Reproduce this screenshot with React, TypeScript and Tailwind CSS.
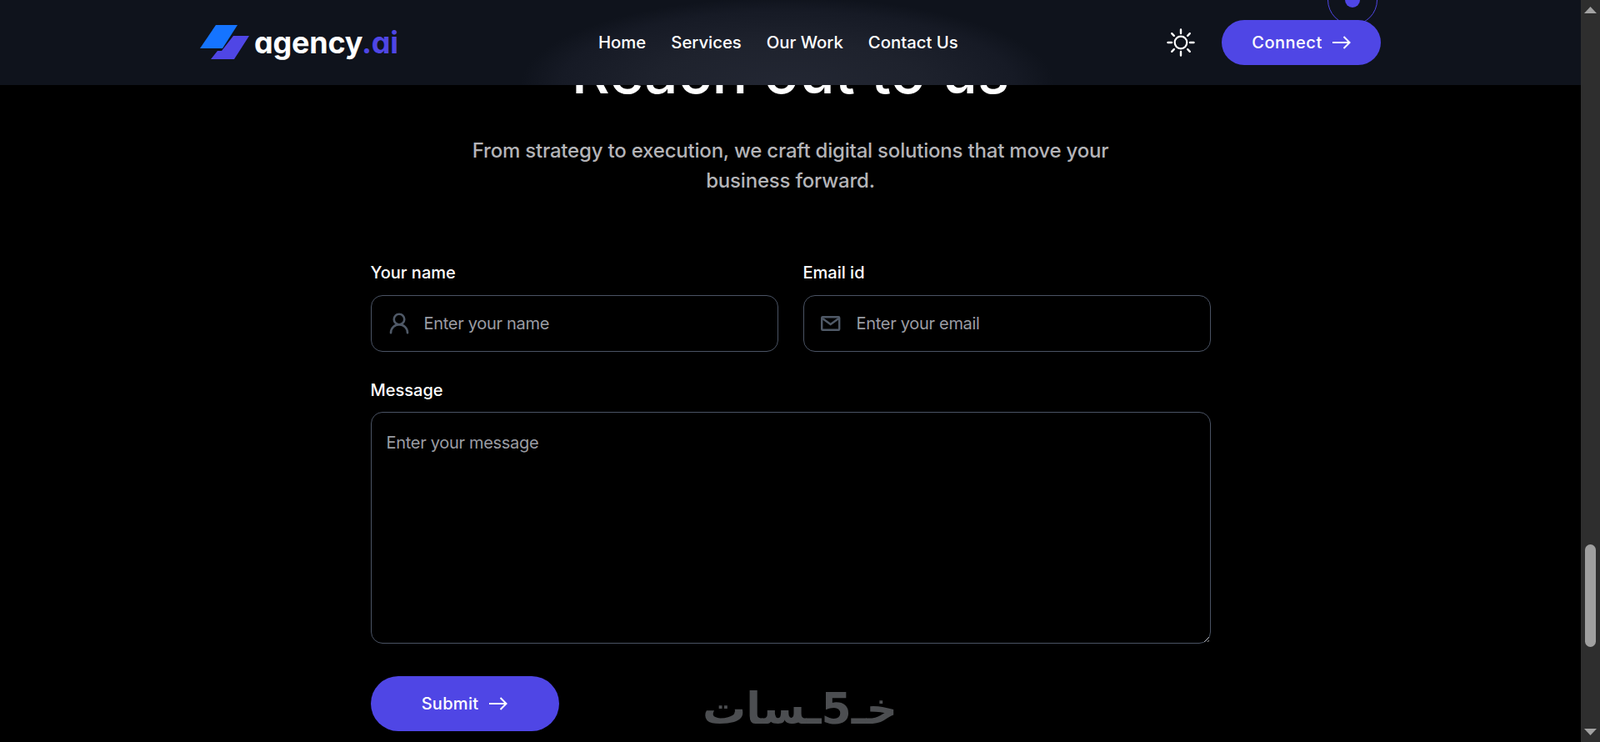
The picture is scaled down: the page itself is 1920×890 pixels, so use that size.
import { UserRound } from "lucide-react";

const navLinks = ["Home", "Services", "Our Work", "Contact Us"];

function Arrow() {
  return (
    <svg width="22" height="16" viewBox="0 0 22 16" fill="none" stroke="currentColor" strokeWidth="2">
      <path d="M0 8h20.5M13.5 1l7 7-7 7" />
    </svg>
  );
}

function SunIcon() {
  return (
    <svg width="34" height="34" viewBox="0 0 34 34" fill="none" stroke="white" strokeWidth="2.4" strokeLinecap="round">
      <circle cx="17" cy="17" r="7.3" strokeWidth="2.2" />
      <path d="M17 1.5v4.5M17 28v4.5M1.5 17H6M28 17h4.5M6.2 6.2l2.6 2.6M25.2 25.2l2.6 2.6M6.2 27.8l2.6-2.6M25.2 8.8l2.6-2.6" />
    </svg>
  );
}

function MailIcon() {
  return (
    <svg width="30" height="30" viewBox="0 0 30 30" fill="none" stroke="#4f5967" strokeWidth="2.4" className="shrink-0">
      <rect x="3.2" y="7.2" width="21" height="15.6" rx="1" />
      <path d="M4 9l9.7 7 9.7-7" />
    </svg>
  );
}

function Logo() {
  return (
    <div className="flex items-center gap-[6px]">
      <svg width="59" height="41" viewBox="0 0 59 41" className="-mt-[1px]">
        <path d="M19 0h26L27 28H0z" fill="#1574ff" />
        <path d="M40 13h19L41 41H13l8-10h5z" fill="#4f46e5" />
      </svg>
      <span className="text-[36px] leading-none font-bold tracking-[-0.2px] text-white [font-feature-settings:'cv11']">
        agency<span className="text-[#4f46e5]">.ai</span>
      </span>
    </div>
  );
}

function Header() {
  return (
    <header className="absolute top-0 left-0 z-10 h-[102px] w-[1897px] overflow-hidden bg-[#0e121b] bg-[radial-gradient(ellipse_320px_105px_at_945px_102px,#232733_0%,#1e222d_50%,#161a25_85%,#0f131c_100%)]">
      <div className="absolute -top-[30px] left-[1593px] flex h-[60px] w-[60px] items-center justify-center rounded-full border border-[#4f46e5]">
        <div className="h-[18px] w-[18px] rounded-full bg-[#4f46e5]" />
      </div>
      <div className="relative flex h-full items-center justify-between px-[240px]">
        <Logo />
        <nav className="absolute left-[718px] flex gap-[30px] text-[20.3px] font-medium text-white">
          {navLinks.map((link) => (
            <a key={link} href="#">
              {link}
            </a>
          ))}
        </nav>
        <div className="flex items-center gap-[32px]">
          <SunIcon />
          <button className="flex h-[54px] w-[191px] items-center justify-center gap-[12px] rounded-full bg-[#4f46e5] text-[20px] font-medium tracking-[0.5px] text-white">
            Connect
            <Arrow />
          </button>
        </div>
      </div>
    </header>
  );
}

function Field({
  label,
  placeholder,
  icon,
}: {
  label: string;
  placeholder: string;
  icon: React.ReactNode;
}) {
  return (
    <label className="block">
      <span className="block text-[20px] leading-[28px] font-medium text-white">{label}</span>
      <span className="mt-[13px] flex h-[68px] items-center gap-[15px] rounded-[14px] border border-[#4a5364] pl-[18px]">
        {icon}
        <input
          placeholder={placeholder}
          className="w-full bg-transparent text-[20px] tracking-[-0.3px] text-white outline-none placeholder:text-[#9a9ca3]"
        />
      </span>
    </label>
  );
}

function ContactForm() {
  return (
    <form className="mt-[78px] w-[1008px]">
      <div className="grid grid-cols-2 gap-[30px]">
        <Field
          label="Your name"
          placeholder="Enter your name"
          icon={<UserRound className="h-[30px] w-[30px] shrink-0 text-[#4f5967]" strokeWidth={2.1} />}
        />
        <Field label="Email id" placeholder="Enter your email" icon={<MailIcon />} />
      </div>
      <label className="mt-[32px] block">
        <span className="block text-[20px] leading-[28px] font-medium text-white">Message</span>
        <textarea
          placeholder="Enter your message"
          className="mt-[12px] block h-[278px] w-full rounded-[14px] border border-[#4a5364] bg-transparent px-[18px] py-[22px] text-[20px] leading-[28px] tracking-[-0.3px] text-white outline-none placeholder:text-[#9a9ca3]"
        />
      </label>
      <button
        type="button"
        className="mt-[39px] flex h-[66px] w-[226px] items-center justify-center gap-[13px] rounded-full bg-[#4f46e5] text-[20px] font-medium tracking-[0.3px] text-white"
      >
        Submit
        <Arrow />
      </button>
    </form>
  );
}

function Scrollbar() {
  return (
    <div className="relative h-full w-[23px] shrink-0 bg-[#2e2e2e]">
      <svg width="15" height="8" viewBox="0 0 15 8" className="absolute top-[8px] left-[4px]">
        <path d="M0 8h15L7.5 0z" fill="#a3a3a3" />
      </svg>
      <div className="absolute top-[653px] left-[5px] h-[123px] w-[13px] rounded-full bg-[#9f9f9f]" />
      <svg width="15" height="8" viewBox="0 0 15 8" className="absolute top-[874px] left-[4px]">
        <path d="M0 0h15l-7.5 8z" fill="#a3a3a3" />
      </svg>
    </div>
  );
}

export default function App() {
  return (
    <div className="relative flex h-[890px] overflow-hidden bg-black font-['Inter','Liberation_Sans',sans-serif]">
      <Header />
      <main className="flex flex-1 flex-col items-center">
        <h2 className="mt-[61px] text-[71px] leading-[50px] font-medium text-white">Reach out to us</h2>
        <p className="mt-[52px] w-[800px] text-center text-[24px] leading-[36px] font-medium tracking-[-0.2px] text-[#b4b4b8]">
          From strategy to execution, we craft digital solutions that move your business forward.
        </p>
        <ContactForm />
      </main>
      <Scrollbar />
      <div
        dir="rtl"
        className="absolute top-[815px] left-[835px] z-20 w-[250px] text-center font-['DejaVu_Sans',sans-serif] text-[52px] leading-[70px] font-bold text-[#4c4e51]"
      >
        خـ5ـسات
      </div>
    </div>
  );
}
